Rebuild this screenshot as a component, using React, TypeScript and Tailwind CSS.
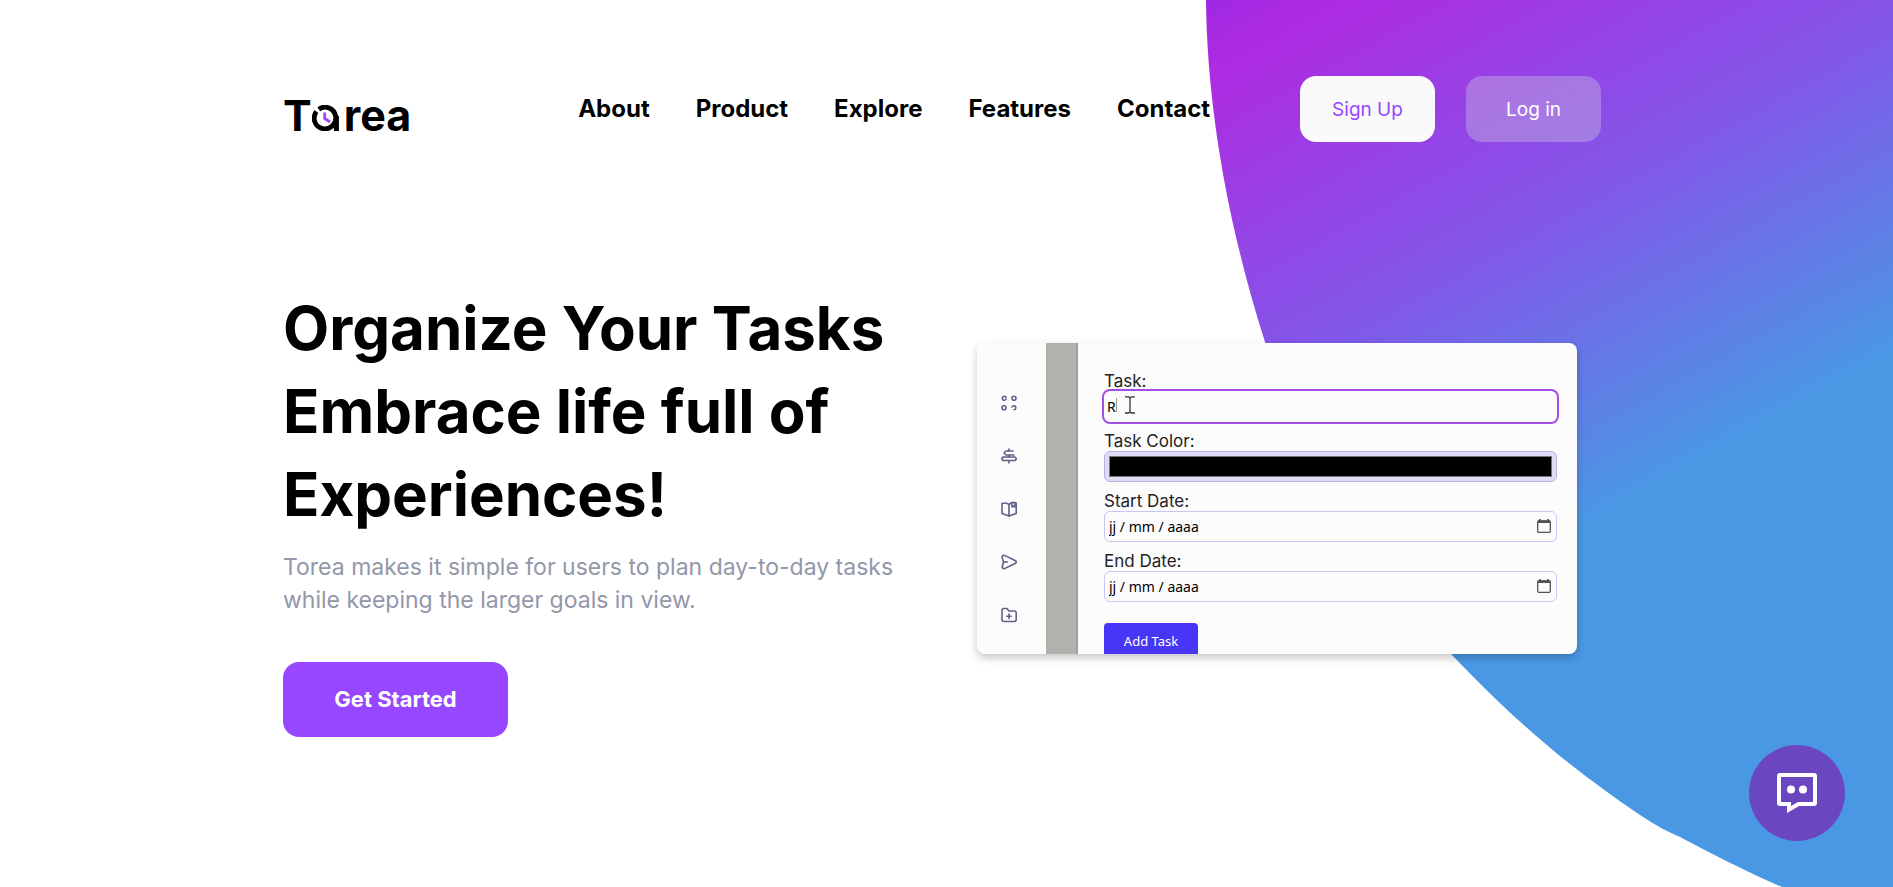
import React from "react";

const navItems = ["About", "Product", "Explore", "Features", "Contact"];

function Backdrop() {
  return (
    <svg
      aria-hidden="true"
      className="absolute top-0 right-0 h-[887px] w-[693px]"
      viewBox="1200 0 693 887"
      fill="none"
    >
      <defs>
        <linearGradient id="sky" gradientUnits="userSpaceOnUse" x1="1206" y1="0" x2="1518" y2="562">
          <stop offset="0" stopColor="#9f28e2" />
          <stop offset="0.1" stopColor="#ae2be1" />
          <stop offset="0.55" stopColor="#8257e9" />
          <stop offset="1" stopColor="#4a98e4" />
        </linearGradient>
      </defs>
      <path
        d="M1206 0C1207 110 1229 229 1265 342C1300 455 1365 565 1451 654C1515 721 1570 768 1640 815C1655 825 1668 832 1680 837C1712 854 1745 871 1782 887H1893V0Z"
        fill="url(#sky)"
      />
    </svg>
  );
}

function Logo() {
  return (
    <a
      href="#home"
      aria-label="Tarea"
      className="flex items-baseline pt-3 text-[43px] leading-none font-bold"
    >
      <span>T</span>
      <svg width="28" height="26" viewBox="0 0 28 26" fill="none" aria-hidden="true">
        <path d="M6.8 4.2A10.8 10.8 0 1 1 4.4 6.5" stroke="#000" strokeWidth="4.8" />
        <path d="M24.4 11V26" stroke="#000" strokeWidth="5" />
        <path d="M12.7 7.5V13.5L18 17" stroke="#9747ff" strokeWidth="2.8" />
      </svg>
      <span className="ml-1">rea</span>
    </a>
  );
}

const sidebarIcons = [
  {
    label: "Dashboard",
    paths: ["M5.2 2.6A2 2 0 1 0 5 4.4", "M15 3.2A2 2 0 1 1 11 3.2A2 2 0 1 1 15 3.2", "M5 12.8A2 2 0 1 1 1 12.8A2 2 0 1 1 5 12.8", "M11 12A2 2 0 1 1 13 14.8"],
  },
  {
    label: "Roadmap",
    paths: ["M8 1V3M8 7.5V9M8 12.8V15", "M12 3H5L3 5L5 7H13", "M2 9H14L15.5 10.8L14 12.5H2L.8 10.8Z"],
  },
  {
    label: "Journal",
    paths: ["M8 3.5V15L1 12.5V2.5C4 1.5 6 2 8 3.5Z", "M8 3.5C10 1.5 13 1 15.2 2V12.5L8 15", "M11 2V6L12.6 5L14 6V2"],
  },
  {
    label: "Send",
    paths: ["M1 3.2C1 1.5 2.6 1 4 1.6L14 6.5C15.8 7.5 15.8 8.5 14 9.5L4 14.4C2.5 15 1 14.2 1.2 12.8L2.6 8Z", "M2.6 8H6.5"],
  },
  {
    label: "New folder",
    paths: ["M1 5V3.5C1 2 2 1.5 3 1.5H6L8 4H13C14.5 4 15.2 4.6 15.2 6V12.5C15.2 14 14.5 14.5 13 14.5H3C1.5 14.5 1 14 1 12.5Z", "M8 7V11.4M5.8 9.2H10.2"],
  },
];

function Field({ id, label, children }: { id: string; label: string; children: React.ReactNode }) {
  return (
    <div className="flex flex-col">
      <label htmlFor={id} className="text-[17px] leading-5 text-[#222]">
        {label}
      </label>
      {children}
    </div>
  );
}

function DateField({ id, label }: { id: string; label: string }) {
  return (
    <Field id={id} label={label}>
      <div className="relative flex">
        <input
          id={id}
          type="text"
          defaultValue="jj / mm / aaaa"
          className="h-[31px] w-full rounded-md border border-[#cbc4f2] bg-transparent px-1 font-['Noto_Sans',sans-serif] text-sm outline-none"
        />
        <svg className="absolute top-2 right-[6px]" width="14" height="14" viewBox="0 0 14 14" aria-hidden="true">
          <rect x="0.7" y="2" width="12.6" height="11.3" rx="1" fill="none" stroke="#55524f" strokeWidth="1.3" />
          <path d="M0.7 1.5H13.3V4H0.7ZM2.3 0H4V2H2.3ZM10 0H11.7V2H10Z" fill="#55524f" />
        </svg>
      </div>
    </Field>
  );
}

function TaskCard() {
  return (
    <section
      aria-label="Task form"
      className="mt-14 mr-[33px] flex h-[311px] w-[600px] shrink-0 overflow-hidden rounded-lg bg-[#fcfcfd] shadow-[0_4px_8px_rgba(0,0,0,0.22)]"
    >
      <div className="flex w-[69px] flex-col items-center gap-[37px] pt-[52px] pr-[6px]">
        {sidebarIcons.map((icon) => (
          <svg
            key={icon.label}
            className="shrink-0"
            width="16"
            height="16"
            viewBox="0 0 16 16"
            fill="none"
            stroke="#5f6088"
            strokeWidth="1.6"
            strokeLinecap="round"
            strokeLinejoin="round"
            role="img"
            aria-label={icon.label}
          >
            {icon.paths.map((d) => (
              <path key={d} d={d} />
            ))}
          </svg>
        ))}
      </div>
      <div className="w-8 border-r-2 border-[#a09f9f] bg-[#b1b1ad]" />
      <form className="flex flex-1 flex-col gap-[9px] pt-7 pr-5 pl-[26px]">
        <Field id="task" label="Task:">
          <div className="relative flex">
            <input
              id="task"
              type="text"
              defaultValue="R"
              className="h-[31px] w-full rounded-md bg-transparent px-[3px] font-['Noto_Sans',sans-serif] text-sm ring-2 ring-[#a34fe6] outline-none"
            />
            <svg
              className="absolute top-[5px] left-3"
              width="20"
              height="19"
              viewBox="0 0 20 19"
              fill="none"
              aria-hidden="true"
            >
              <path d="M0.5 2V16" stroke="#999" />
              <path d="M9 0.8H12.5L14 2L15.5 0.8H19M14 2V16M9 17H12.5L14 16L15.5 17H19" stroke="#333" strokeWidth="1.3" />
            </svg>
          </div>
        </Field>
        <Field id="color" label="Task Color:">
          <input
            id="color"
            type="color"
            defaultValue="#000000"
            className="h-[31px] w-full appearance-none rounded-md border border-[#bcaee6] bg-[#e0daf3] p-1 [&::-webkit-color-swatch]:rounded-none [&::-webkit-color-swatch]:border-[#777] [&::-webkit-color-swatch-wrapper]:p-0"
          />
        </Field>
        <DateField id="start" label="Start Date:" />
        <DateField id="end" label="End Date:" />
        <button
          type="button"
          className="mt-3 h-[38px] w-[94px] shrink-0 rounded-[4px] bg-[#4836f6] font-['Noto_Sans',sans-serif] text-[13px] text-white"
        >
          Add Task
        </button>
      </form>
    </section>
  );
}

export default function App() {
  return (
    <div className="relative min-h-screen overflow-hidden bg-white font-['Inter',sans-serif] text-black">
      <Backdrop />
      <header className="relative mx-auto flex w-full max-w-[1327px] items-center pt-[76px]">
        <Logo />
        <nav className="ml-[167px] flex gap-[46px] text-[24px] leading-8 font-bold">
          {navItems.map((item) => (
            <a key={item} href={"#" + item.toLowerCase()}>
              {item}
            </a>
          ))}
        </nav>
        <div className="mr-[9px] ml-auto flex gap-[31px] text-[19px]">
          <button type="button" className="h-[66px] w-[135px] rounded-2xl bg-[#fafafa] pt-[3px] text-[#9747ff]">
            Sign Up
          </button>
          <button type="button" className="h-[66px] w-[135px] rounded-2xl bg-[#d0d0dc]/35 pt-[3px] text-white">
            Log in
          </button>
        </div>
      </header>
      <main className="relative mx-auto flex w-full max-w-[1327px] items-start justify-between pt-[145px]">
        <div>
          <h1 className="text-[60px] leading-[83px] font-bold">
            Organize Your Tasks
            <br />
            Embrace life full of
            <br />
            Experiences!
          </h1>
          <p className="mt-[15px] max-w-[640px] text-[23px] leading-[33px] text-[#9297a9]">
            Torea makes it simple for users to plan day-to-day tasks while keeping the larger goals in view.
          </p>
          <button
            type="button"
            className="mt-[45px] h-[75px] w-[225px] rounded-2xl bg-[#9747ff] text-[22px] font-bold text-white"
          >
            Get Started
          </button>
        </div>
        <TaskCard />
      </main>
      <button
        type="button"
        aria-label="Open chat"
        className="fixed right-12 bottom-[46px] flex h-24 w-24 items-center justify-center rounded-full bg-[#6b46c1]"
      >
        <svg width="40" height="40" viewBox="0 0 40 40" fill="none" aria-hidden="true">
          <path d="M3 2H37Q38 2 38 3V30Q38 31 37 31H21.5L12 36.5V31H3Q2 31 2 30V3Q2 2 3 2Z" stroke="#fff" strokeWidth="4" />
          <circle cx="14" cy="16.5" r="4" fill="#fff" />
          <circle cx="26" cy="16.5" r="4" fill="#fff" />
        </svg>
      </button>
    </div>
  );
}
